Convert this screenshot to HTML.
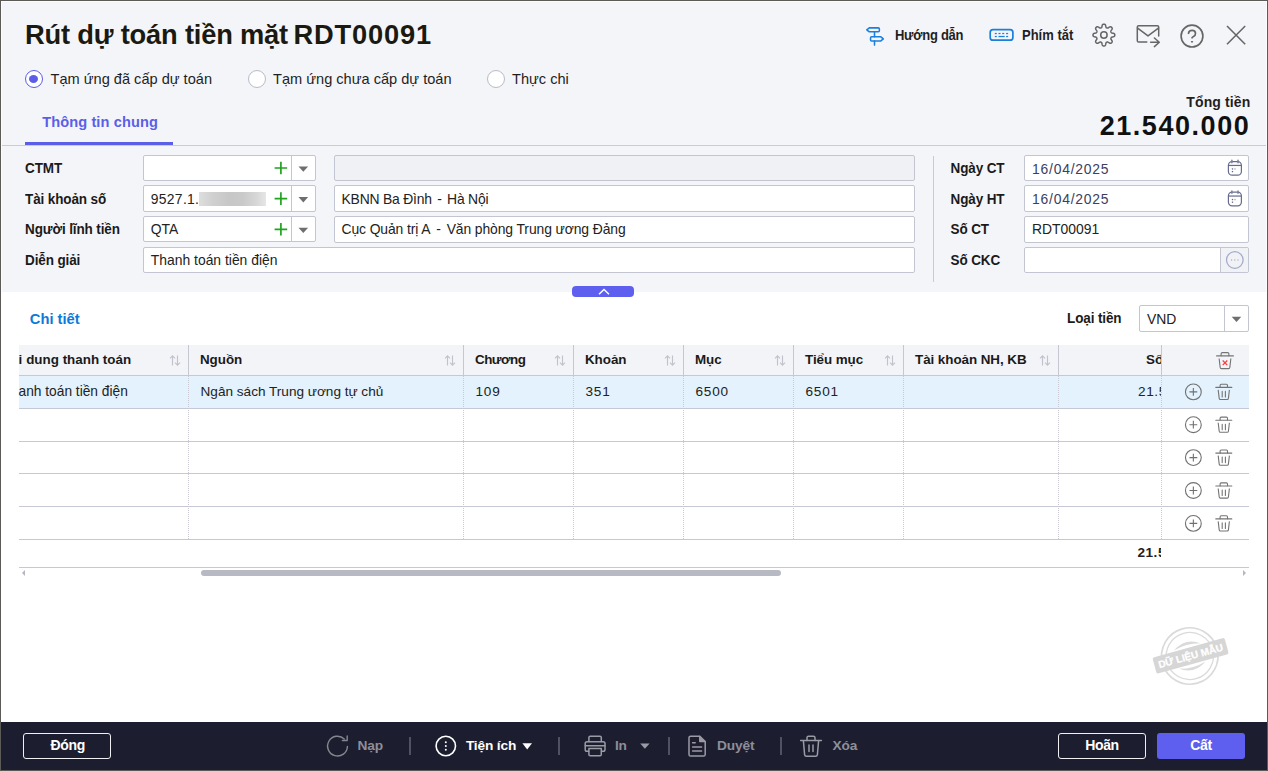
<!DOCTYPE html>
<html lang="vi">
<head>
<meta charset="utf-8">
<title>Rút dự toán tiền mặt RDT00091</title>
<style>
*{box-sizing:border-box;margin:0;padding:0}
html,body{width:1268px;height:771px;overflow:hidden;background:#fff}
body{font-family:"Liberation Sans",sans-serif;font-size:14px;color:#1f1f1f;position:relative}
.abs{position:absolute}
.t{position:absolute;white-space:nowrap;line-height:1;transform-origin:0 50%}
.b{font-weight:bold}
#hdr{left:0;top:0;width:1268px;height:292px;background:#f4f5f9}
#frame-l{left:0;top:0;width:1px;height:771px;background:#5c5a57}
#frame-t{left:0;top:0;width:1268px;height:1px;background:#5c5a57}
#frame-r{left:1267px;top:0;width:1px;height:771px;background:#5c5a57}
#frame-b{left:0;top:770px;width:1268px;height:1px;background:#5c5a57}
.inl{background:#fdfdff}
#sep{left:1px;top:145px;width:1266px;height:1px;background:#c9cbd6}
#tabline{left:25px;top:142px;width:148px;height:3px;background:#5b5fe8}
.inp{position:absolute;height:26px;background:#fff;border:1px solid #c3c5d0;border-radius:2px}
.inp.dis{background:#f0f1f5}
.vdiv{position:absolute;top:0;width:1px;height:24px;background:#c3c5d0}
.radio{position:absolute;width:18px;height:18px;border-radius:50%;border:1px solid #b9bbc7;background:#fff}
.radio.on{border-color:#5b5fe8}
.radio.on:after{content:"";position:absolute;left:3px;top:4px;width:9px;height:8px;border-radius:50%;background:#5b5fe8}
#foot{left:0;top:722px;width:1268px;height:49px;background:#1c1e2f}
.fbtn{position:absolute;height:26px;border-radius:3px;color:#fff;font-weight:bold;font-size:14px;letter-spacing:-.35px;text-align:center;line-height:23px}
.lbl{font-size:13.5px;color:#1a1a1a;letter-spacing:-.12px;margin-top:.2px;transform-origin:0 84.65%;transform:scaleY(1.06)}
.it{font-size:13.9px;color:#222}
.th{font-size:13.4px;color:#1a1a1a;letter-spacing:-.05px}
.td{font-size:13.6px;color:#222}
.hv{top:345px;width:1px;height:30px;background:#c5c7d2}
.ft{top:738.7px;font-size:13.7px;letter-spacing:-.15px}
.ft.dis{color:#8e8f99}
.fsep{position:absolute;top:737px;width:2px;height:18px;background:#505263}
/* grid */
.hl{position:absolute;height:1px;background:#c6c8d6}
.vl{position:absolute;width:0;border-left:1px dotted #c8c9d3}
</style>
</head>
<body>
<div id="hdr" class="abs"></div>
<div id="sep" class="abs"></div>
<div id="tabline" class="abs"></div>

<!-- title -->
<div class="t b" id="title" style="left:25px;top:20.7px;font-size:27.3px;color:#1a1a10;letter-spacing:-.2px">Rút dự toán tiền mặt</div><div class="t b" id="title2" style="left:293.6px;top:20.7px;font-size:27.3px;color:#1a1a10;letter-spacing:.8px">RDT00091</div>

<!-- radios -->
<div class="radio on" style="left:25px;top:70px"></div>
<div class="t" id="r1" style="left:50.5px;top:71.9px;font-size:14.6px">Tạm ứng đã cấp dự toán</div>
<div class="radio" style="left:248px;top:70px"></div>
<div class="t" id="r2" style="left:273px;top:71.9px;font-size:14.6px">Tạm ứng chưa cấp dự toán</div>
<div class="radio" style="left:487px;top:70px"></div>
<div class="t" id="r3" style="left:512px;top:71.9px;font-size:14.6px">Thực chi</div>

<!-- tab -->
<div class="t b" id="tab" style="left:42.2px;top:114.6px;font-size:14.6px;color:#5b5fe8;letter-spacing:.1px">Thông tin chung</div>

<!-- total -->
<div class="t b" id="tt" style="left:1186.3px;top:95.2px;font-size:14px;letter-spacing:.12px">Tổng tiền</div>
<div class="t b" id="tot" style="left:1099.7px;top:113.4px;font-size:27px;color:#111;letter-spacing:1.55px">21.540.000</div>

<!-- header links -->
<div class="t b" id="hd" style="left:895px;top:28.6px;font-size:13px;letter-spacing:-.27px;transform-origin:0 84.65%;transform:scaleY(1.085);color:#1f1f1f">Hướng dẫn</div>
<div class="t b" id="pt" style="left:1022px;top:28.6px;font-size:13px;transform-origin:0 84.65%;transform:scaleY(1.085);color:#1f1f1f">Phím tắt</div>

<!-- FORM -->
<div class="t b lbl" id="l1" style="left:25px;top:162px">CTMT</div>
<div class="t b lbl" id="l2" style="left:25px;top:192.8px">Tài khoản số</div>
<div class="t b lbl" id="l3" style="left:25px;top:222.9px">Người lĩnh tiền</div>
<div class="t b lbl" id="l4" style="left:25px;top:254px">Diễn giải</div>

<div class="inp" style="left:143px;top:155px;width:173px"><div class="vdiv" style="left:147px"></div></div>
<div class="inp" style="left:143px;top:185px;height:27px;width:173px"><div class="vdiv" style="left:147px;height:25px"></div></div>
<div class="inp" style="left:143px;top:216px;width:173px"><div class="vdiv" style="left:147px"></div></div>
<div class="inp dis" style="left:334px;top:155px;width:581px"></div>
<div class="inp" style="left:334px;top:185px;height:27px;width:581px"></div>
<div class="inp" style="left:334px;top:216px;height:27px;width:581px"></div>
<div class="inp" style="left:143px;top:247px;width:772px"></div>

<div class="abs" id="blur" style="left:199px;top:191.5px;width:67px;height:14.5px;background:linear-gradient(90deg,#dedede 0%,#d0d0d0 20%,#c7c7c7 45%,#c9c9c9 65%,#d6d6d6 85%,#e6e6e6 100%)"></div>
<div class="t it" id="i1" style="left:150.8px;top:192.6px;letter-spacing:.3px">9527.1.</div>
<div class="t it" id="i2" style="left:150.8px;top:223.2px">QTA</div>
<div class="t it" id="i3" style="left:341.5px;top:192.6px;letter-spacing:-.2px">KBNN Ba Đình<span style="margin:0 1.8px"> - </span>Hà Nội</div>
<div class="t it" id="i4" style="left:341.5px;top:223.2px;letter-spacing:-.1px">Cục Quản trị A<span style="margin:0 2.1px"> - </span>Văn phòng Trung ương Đảng</div>
<div class="t it" id="i5" style="left:150.8px;top:253.9px">Thanh toán tiền điện</div>

<div class="abs" style="left:933px;top:156px;width:1px;height:126px;background:#c9cad2"></div>
<div class="t b lbl" id="l5" style="left:950.5px;top:162px">Ngày CT</div>
<div class="t b lbl" id="l6" style="left:950.5px;top:192.8px">Ngày HT</div>
<div class="t b lbl" id="l7" style="left:950.5px;top:222.9px">Số CT</div>
<div class="t b lbl" id="l8" style="left:950.5px;top:254px">Số CKC</div>
<div class="inp" style="left:1024px;top:155px;width:225px"></div>
<div class="inp" style="left:1024px;top:185px;height:27px;width:225px"></div>
<div class="inp" style="left:1024px;top:216px;height:27px;width:225px"></div>
<div class="inp" style="left:1024px;top:247px;width:225px"><div class="abs" style="left:195px;top:0;width:28px;height:24px;background:#f1f2f6;border-left:1px solid #c3c5d0"></div></div>
<div class="t it" id="d1" style="left:1032px;top:162.5px;color:#3b4060;letter-spacing:.78px">16/04/2025</div>
<div class="t it" id="d2" style="left:1032px;top:193.2px;color:#3b4060;letter-spacing:.78px">16/04/2025</div>
<div class="t it" id="d3" style="left:1032px;top:223px">RDT00091</div>

<!-- collapse -->
<div class="abs" style="left:572px;top:286px;width:62px;height:11px;border-radius:4px;background:#5e5fee"></div>

<!-- detail header -->
<div class="t b" id="ct" style="left:29.8px;top:312.2px;font-size:14.7px;color:#0d7ad9">Chi tiết</div>
<div class="t b lbl" id="lt" style="left:1067px;top:312.3px">Loại tiền</div>
<div class="inp" style="left:1139px;top:305px;width:110px;height:27px"><div class="vdiv" style="left:84px;height:25px"></div></div>
<div class="t it" id="vnd" style="left:1147px;top:313.3px">VND</div>

<!-- TABLE -->
<div class="abs" id="thead" style="left:19px;top:345px;width:1230px;height:30px;background:#f3f4f8"></div>
<div class="abs" id="rowsel" style="left:19px;top:376px;width:1230px;height:32px;background:#e3f2fd"></div>
<div class="hl" style="left:19px;top:375px;width:1230px"></div>
<div class="hl" style="left:19px;top:408px;width:1230px"></div>
<div class="hl" style="left:19px;top:441px;width:1230px"></div>
<div class="hl" style="left:19px;top:473px;width:1230px"></div>
<div class="hl" style="left:19px;top:506px;width:1230px"></div>
<div class="hl" style="left:19px;top:539px;width:1230px"></div>
<div class="hl" style="left:19px;top:567px;width:1230px"></div>
<!-- header solid vlines -->
<div class="abs hv" style="left:188px"></div>
<div class="abs hv" style="left:463px"></div>
<div class="abs hv" style="left:573px"></div>
<div class="abs hv" style="left:683px"></div>
<div class="abs hv" style="left:793px"></div>
<div class="abs hv" style="left:903px"></div>
<div class="abs hv" style="left:1058px"></div>
<div class="abs hv" style="left:1161px"></div>
<!-- body dotted vlines -->
<div class="vl" style="left:188px;top:376px;height:163px"></div>
<div class="vl" style="left:463px;top:376px;height:163px"></div>
<div class="vl" style="left:573px;top:376px;height:163px"></div>
<div class="vl" style="left:683px;top:376px;height:163px"></div>
<div class="vl" style="left:793px;top:376px;height:163px"></div>
<div class="vl" style="left:903px;top:376px;height:163px"></div>
<div class="vl" style="left:1058px;top:376px;height:163px"></div>
<div class="vl" style="left:1161px;top:376px;height:163px"></div>

<div class="t b th" id="h1a" style="left:18.5px;top:352.8px">i</div><div class="t b th" id="h1" style="left:26.2px;top:352.8px;letter-spacing:0">dung thanh toán</div>
<div class="t b th" id="h2" style="left:200px;top:352.8px">Nguồn</div>
<div class="t b th" id="h3" style="letter-spacing:-.5px;left:475px;top:352.8px">Chương</div>
<div class="t b th" id="h4" style="left:585px;top:352.8px">Khoản</div>
<div class="t b th" id="h5" style="left:695px;top:352.8px">Mục</div>
<div class="t b th" id="h6" style="left:805px;top:352.8px">Tiểu mục</div>
<div class="t b th" id="h7" style="left:915px;top:352.8px">Tài khoản NH, KB</div>
<div class="abs" style="left:1100px;top:345px;width:61px;height:30px;overflow:hidden"><div class="t b th" id="h8" style="left:46px;top:7.8px">Số tiền</div></div>

<div class="t td" id="c1" style="left:18.5px;top:384.8px;font-size:13.75px">anh toán tiền điện</div>
<div class="t td" id="c2" style="left:200.5px;top:384.8px">Ngân sách Trung ương tự chủ</div>
<div class="t td" id="c3" style="letter-spacing:.8px;left:475.5px;top:384.8px">109</div>
<div class="t td" id="c4" style="letter-spacing:.8px;left:585.5px;top:384.8px">351</div>
<div class="t td" id="c5" style="letter-spacing:.8px;left:695.5px;top:384.8px">6500</div>
<div class="t td" id="c6" style="letter-spacing:.8px;left:805.5px;top:384.8px">6501</div>
<div class="abs" style="left:1100px;top:376px;width:61px;height:32px;overflow:hidden"><div class="t td" id="c8" style="letter-spacing:.6px;left:38px;top:8.8px">21.540.000</div></div>
<div class="abs" style="left:1100px;top:540px;width:61px;height:26px;overflow:hidden"><div class="t b td" id="f8" style="letter-spacing:.5px;left:37.5px;top:6px">21.540.000</div></div>

<!-- scrollbar -->
<div class="abs" style="left:201px;top:570px;width:580px;height:6px;border-radius:3px;background:#b8bac3"></div>
<div class="abs" style="left:22px;top:570px;width:0;height:0;border-top:3px solid transparent;border-bottom:3px solid transparent;border-right:3px solid #b4b6c0"></div>
<div class="abs" style="left:1243px;top:570px;width:0;height:0;border-top:3px solid transparent;border-bottom:3px solid transparent;border-left:3px solid #b4b6c0"></div>

<svg class="abs" id="ov" style="left:0;top:0" width="1268" height="771" viewBox="0 0 1268 771">
<g stroke="#1b7fdc" stroke-width="1.55" fill="none" stroke-linejoin="round" stroke-linecap="round"><path d="M869.3 27.85H878.3Q879.35 27.85 879.35 28.9V30.75Q879.35 31.8 878.3 31.8H869.3L866.8 29.8Z"/><path d="M871.6 36.8H880.9L883.3 38.9L880.9 40.95H871.6Q870.55 40.95 870.55 39.9V37.85Q870.55 36.8 871.6 36.8Z"/><path d="M874.5 31.9V36.7M874.5 41V45.1"/></g>
<g><rect x="990.2" y="29.6" width="22.7" height="10.6" rx="2.8" stroke="#1b7fdc" stroke-width="1.7" fill="none"/><g fill="#1b7fdc"><rect x="994.8" y="32.9" width="2" height="1.25"/><rect x="998.5" y="32.9" width="2" height="1.25"/><rect x="1002.2" y="32.9" width="2" height="1.25"/><rect x="1006.1" y="32.9" width="2" height="1.25"/><rect x="994.8" y="35.9" width="2" height="1.25"/><rect x="998.5" y="35.9" width="6.2" height="1.25"/><rect x="1006.1" y="35.9" width="2" height="1.25"/></g></g>
<g stroke="#666" stroke-width="1.5" fill="none" stroke-linejoin="round"><path d="M1114.80 35.05L1114.79 35.34L1114.74 35.62L1114.66 35.90L1114.51 36.17L1114.26 36.41L1113.87 36.63L1113.33 36.80L1112.72 36.92L1112.17 37.04L1111.77 37.16L1111.50 37.30L1111.32 37.46L1111.20 37.63L1111.10 37.81L1111.01 38.00L1110.94 38.19L1110.89 38.38L1110.86 38.59L1110.87 38.83L1110.96 39.12L1111.15 39.49L1111.46 39.96L1111.80 40.48L1112.07 40.98L1112.19 41.41L1112.19 41.77L1112.11 42.06L1111.97 42.32L1111.80 42.55L1111.61 42.76L1111.40 42.95L1111.17 43.12L1110.91 43.26L1110.62 43.34L1110.26 43.34L1109.83 43.22L1109.33 42.95L1108.81 42.61L1108.34 42.30L1107.97 42.11L1107.68 42.02L1107.44 42.01L1107.23 42.04L1107.04 42.09L1106.85 42.16L1106.66 42.25L1106.48 42.35L1106.31 42.47L1106.15 42.65L1106.01 42.92L1105.89 43.32L1105.77 43.87L1105.65 44.48L1105.48 45.02L1105.26 45.41L1105.02 45.66L1104.75 45.81L1104.47 45.89L1104.19 45.94L1103.90 45.95L1103.61 45.94L1103.33 45.89L1103.05 45.81L1102.78 45.66L1102.54 45.41L1102.32 45.02L1102.15 44.48L1102.03 43.87L1101.91 43.32L1101.79 42.92L1101.65 42.65L1101.49 42.47L1101.32 42.35L1101.14 42.25L1100.95 42.16L1100.76 42.09L1100.57 42.04L1100.36 42.01L1100.12 42.02L1099.83 42.11L1099.46 42.30L1098.99 42.61L1098.47 42.95L1097.97 43.22L1097.54 43.34L1097.18 43.34L1096.89 43.26L1096.63 43.12L1096.40 42.95L1096.19 42.76L1096.00 42.55L1095.83 42.32L1095.69 42.06L1095.61 41.77L1095.61 41.41L1095.73 40.98L1096.00 40.48L1096.34 39.96L1096.65 39.49L1096.84 39.12L1096.93 38.83L1096.94 38.59L1096.91 38.38L1096.86 38.19L1096.79 38.00L1096.70 37.81L1096.60 37.63L1096.48 37.46L1096.30 37.30L1096.03 37.16L1095.63 37.04L1095.08 36.92L1094.47 36.80L1093.93 36.63L1093.54 36.41L1093.29 36.17L1093.14 35.90L1093.06 35.62L1093.01 35.34L1093.00 35.05L1093.01 34.76L1093.06 34.48L1093.14 34.20L1093.29 33.93L1093.54 33.69L1093.93 33.47L1094.47 33.30L1095.08 33.18L1095.63 33.06L1096.03 32.94L1096.30 32.80L1096.48 32.64L1096.60 32.47L1096.70 32.29L1096.79 32.10L1096.86 31.91L1096.91 31.72L1096.94 31.51L1096.93 31.27L1096.84 30.98L1096.65 30.61L1096.34 30.14L1096.00 29.62L1095.73 29.12L1095.61 28.69L1095.61 28.33L1095.69 28.04L1095.83 27.78L1096.00 27.55L1096.19 27.34L1096.40 27.15L1096.63 26.98L1096.89 26.84L1097.18 26.76L1097.54 26.76L1097.97 26.88L1098.47 27.15L1098.99 27.49L1099.46 27.80L1099.83 27.99L1100.12 28.08L1100.36 28.09L1100.57 28.06L1100.76 28.01L1100.95 27.94L1101.14 27.85L1101.32 27.75L1101.49 27.63L1101.65 27.45L1101.79 27.18L1101.91 26.78L1102.03 26.23L1102.15 25.62L1102.32 25.08L1102.54 24.69L1102.78 24.44L1103.05 24.29L1103.33 24.21L1103.61 24.16L1103.90 24.15L1104.19 24.16L1104.47 24.21L1104.75 24.29L1105.02 24.44L1105.26 24.69L1105.48 25.08L1105.65 25.62L1105.77 26.23L1105.89 26.78L1106.01 27.18L1106.15 27.45L1106.31 27.63L1106.48 27.75L1106.66 27.85L1106.85 27.94L1107.04 28.01L1107.23 28.06L1107.44 28.09L1107.68 28.08L1107.97 27.99L1108.34 27.80L1108.81 27.49L1109.33 27.15L1109.83 26.88L1110.26 26.76L1110.62 26.76L1110.91 26.84L1111.17 26.98L1111.40 27.15L1111.61 27.34L1111.80 27.55L1111.97 27.78L1112.11 28.04L1112.19 28.33L1112.19 28.69L1112.07 29.12L1111.80 29.62L1111.46 30.14L1111.15 30.61L1110.96 30.98L1110.87 31.27L1110.86 31.51L1110.89 31.72L1110.94 31.91L1111.01 32.10L1111.10 32.29L1111.20 32.47L1111.32 32.64L1111.50 32.80L1111.77 32.94L1112.17 33.06L1112.72 33.18L1113.33 33.30L1113.87 33.47L1114.26 33.69L1114.51 33.93L1114.66 34.20L1114.74 34.48L1114.79 34.76Z"/><circle cx="1103.9" cy="35.05" r="3.2"/></g>
<g stroke="#666" stroke-width="1.5" fill="none" stroke-linejoin="round" stroke-linecap="round"><path d="M1146.8 42.1H1138.7Q1137.3 42.1 1137.3 40.7V27.1Q1137.3 25.7 1138.7 25.7H1157.3Q1158.7 25.7 1158.7 27.1V36"/><path d="M1137.6 28.2L1148 35.9L1158.4 28.2"/><path d="M1150.6 42.3H1159M1154.4 38L1159.3 42.3L1154.4 46.6"/></g>
<g stroke="#666" stroke-width="1.65" fill="none" stroke-linecap="round"><circle cx="1192" cy="36.1" r="10.9"/><path d="M1188.5 33.3Q1188.8 30.3 1192.1 30.3Q1195.5 30.3 1195.5 33.4Q1195.5 35.4 1193.5 36.4Q1192.1 37 1192 37.8"/></g><rect x="1190.9" y="41" width="2.2" height="1.5" rx=".6" fill="#666"/>
<path d="M1227 26L1245.2 44.2M1245.2 26L1227 44.2" stroke="#666" stroke-width="1.55" fill="none"/>
<path d="M274.59999999999997 168H287.2M280.9 161.7V174.3" stroke="#21a321" stroke-width="1.7" fill="none"/>
<path d="M298.5 166.4H308.1L303.3 171.79999999999998Z" fill="#6e6e6e"/>
<path d="M274.59999999999997 198.6H287.2M280.9 192.29999999999998V204.9" stroke="#21a321" stroke-width="1.7" fill="none"/>
<path d="M298.5 197.0H308.1L303.3 202.39999999999998Z" fill="#6e6e6e"/>
<path d="M274.59999999999997 229.3H287.2M280.9 223.0V235.60000000000002" stroke="#21a321" stroke-width="1.7" fill="none"/>
<path d="M298.5 227.70000000000002H308.1L303.3 233.1Z" fill="#6e6e6e"/>
<g><circle cx="1234.8" cy="260" r="8.3" stroke="#a6aacb" stroke-width="1.3" fill="none"/><circle cx="1231.6" cy="260" r=".7" fill="#a9acc6"/><circle cx="1234.8" cy="260" r=".7" fill="#a9acc6"/><circle cx="1238" cy="260" r=".7" fill="#a9acc6"/></g>
<path d="M599 294.3L604 289.4L609 294.3" stroke="#fff" stroke-width="1.4" fill="none"/>
<path d="M1231.7 316.7H1241.3L1236.5 322.09999999999997Z" fill="#6e6e6e"/>
<g stroke="#c0c3cc" stroke-width="1.15" fill="none"><path d="M172.5 365.5V355.8M170 358.3L172.5 355.8L175 358.3"/><path d="M177.5 355.5V365.2M175 362.7L177.5 365.2L180 362.7"/></g>
<g stroke="#c0c3cc" stroke-width="1.15" fill="none"><path d="M447.5 365.5V355.8M445 358.3L447.5 355.8L450 358.3"/><path d="M452.5 355.5V365.2M450 362.7L452.5 365.2L455 362.7"/></g>
<g stroke="#c0c3cc" stroke-width="1.15" fill="none"><path d="M557.5 365.5V355.8M555 358.3L557.5 355.8L560 358.3"/><path d="M562.5 355.5V365.2M560 362.7L562.5 365.2L565 362.7"/></g>
<g stroke="#c0c3cc" stroke-width="1.15" fill="none"><path d="M667.5 365.5V355.8M665 358.3L667.5 355.8L670 358.3"/><path d="M672.5 355.5V365.2M670 362.7L672.5 365.2L675 362.7"/></g>
<g stroke="#c0c3cc" stroke-width="1.15" fill="none"><path d="M777.5 365.5V355.8M775 358.3L777.5 355.8L780 358.3"/><path d="M782.5 355.5V365.2M780 362.7L782.5 365.2L785 362.7"/></g>
<g stroke="#c0c3cc" stroke-width="1.15" fill="none"><path d="M887.5 365.5V355.8M885 358.3L887.5 355.8L890 358.3"/><path d="M892.5 355.5V365.2M890 362.7L892.5 365.2L895 362.7"/></g>
<g stroke="#c0c3cc" stroke-width="1.15" fill="none"><path d="M1042.5 365.5V355.8M1040 358.3L1042.5 355.8L1045 358.3"/><path d="M1047.5 355.5V365.2M1045 362.7L1047.5 365.2L1050 362.7"/></g>
<g transform="translate(1225 360.6) scale(1.05)" stroke="#747474" stroke-width="1.048" fill="none" stroke-linejoin="round" stroke-linecap="round"><path d="M-8 -4.5H8"/><path d="M-3.7 -4.7V-6.5Q-3.7 -7.6 -2.6 -7.6H2.6Q3.7 -7.6 3.7 -6.5V-4.7"/><path d="M-5.6 -2L-4.6 6.5Q-4.5 7.6 -3.4 7.6H3.4Q4.5 7.6 4.6 6.5L5.6 -2" stroke-linecap="butt"/></g>
<path d="M1222.7 360.5L1227.3 365.1M1227.3 360.5L1222.7 365.1" stroke="#ff3a3a" stroke-width="1.3" fill="none"/>
<g stroke="#707070" stroke-width="1.1" fill="none"><circle cx="1193.35" cy="391.9" r="7.9"/><path d="M1189.4499999999998 391.9H1197.25M1193.35 388.0V395.79999999999995"/></g>
<g transform="translate(1223.8 391.9) scale(1.0)" stroke="#747474" stroke-width="1.100" fill="none" stroke-linejoin="round" stroke-linecap="round"><path d="M-8 -4.5H8"/><path d="M-3.7 -4.7V-6.5Q-3.7 -7.6 -2.6 -7.6H2.6Q3.7 -7.6 3.7 -6.5V-4.7"/><path d="M-5.6 -2L-4.6 6.5Q-4.5 7.6 -3.4 7.6H3.4Q4.5 7.6 4.6 6.5L5.6 -2" stroke-linecap="butt"/><path d="M-1.6 -0.5V5M1.6 -0.5V5"/></g>
<g stroke="#707070" stroke-width="1.1" fill="none"><circle cx="1193.35" cy="424.7" r="7.9"/><path d="M1189.4499999999998 424.7H1197.25M1193.35 420.8V428.59999999999997"/></g>
<g transform="translate(1223.8 424.7) scale(1.0)" stroke="#747474" stroke-width="1.100" fill="none" stroke-linejoin="round" stroke-linecap="round"><path d="M-8 -4.5H8"/><path d="M-3.7 -4.7V-6.5Q-3.7 -7.6 -2.6 -7.6H2.6Q3.7 -7.6 3.7 -6.5V-4.7"/><path d="M-5.6 -2L-4.6 6.5Q-4.5 7.6 -3.4 7.6H3.4Q4.5 7.6 4.6 6.5L5.6 -2" stroke-linecap="butt"/><path d="M-1.6 -0.5V5M1.6 -0.5V5"/></g>
<g stroke="#707070" stroke-width="1.1" fill="none"><circle cx="1193.35" cy="457.6" r="7.9"/><path d="M1189.4499999999998 457.6H1197.25M1193.35 453.70000000000005V461.5"/></g>
<g transform="translate(1223.8 457.6) scale(1.0)" stroke="#747474" stroke-width="1.100" fill="none" stroke-linejoin="round" stroke-linecap="round"><path d="M-8 -4.5H8"/><path d="M-3.7 -4.7V-6.5Q-3.7 -7.6 -2.6 -7.6H2.6Q3.7 -7.6 3.7 -6.5V-4.7"/><path d="M-5.6 -2L-4.6 6.5Q-4.5 7.6 -3.4 7.6H3.4Q4.5 7.6 4.6 6.5L5.6 -2" stroke-linecap="butt"/><path d="M-1.6 -0.5V5M1.6 -0.5V5"/></g>
<g stroke="#707070" stroke-width="1.1" fill="none"><circle cx="1193.35" cy="490.5" r="7.9"/><path d="M1189.4499999999998 490.5H1197.25M1193.35 486.6V494.4"/></g>
<g transform="translate(1223.8 490.5) scale(1.0)" stroke="#747474" stroke-width="1.100" fill="none" stroke-linejoin="round" stroke-linecap="round"><path d="M-8 -4.5H8"/><path d="M-3.7 -4.7V-6.5Q-3.7 -7.6 -2.6 -7.6H2.6Q3.7 -7.6 3.7 -6.5V-4.7"/><path d="M-5.6 -2L-4.6 6.5Q-4.5 7.6 -3.4 7.6H3.4Q4.5 7.6 4.6 6.5L5.6 -2" stroke-linecap="butt"/><path d="M-1.6 -0.5V5M1.6 -0.5V5"/></g>
<g stroke="#707070" stroke-width="1.1" fill="none"><circle cx="1193.35" cy="523.4" r="7.9"/><path d="M1189.4499999999998 523.4H1197.25M1193.35 519.5V527.3"/></g>
<g transform="translate(1223.8 523.4) scale(1.0)" stroke="#747474" stroke-width="1.100" fill="none" stroke-linejoin="round" stroke-linecap="round"><path d="M-8 -4.5H8"/><path d="M-3.7 -4.7V-6.5Q-3.7 -7.6 -2.6 -7.6H2.6Q3.7 -7.6 3.7 -6.5V-4.7"/><path d="M-5.6 -2L-4.6 6.5Q-4.5 7.6 -3.4 7.6H3.4Q4.5 7.6 4.6 6.5L5.6 -2" stroke-linecap="butt"/><path d="M-1.6 -0.5V5M1.6 -0.5V5"/></g>
<g stroke="#676c8e" stroke-width="1.2" fill="none"><rect x="1228.40" y="161.60" width="13" height="13.6" rx="3.7"/><path d="M1228.40 165.45H1241.40"/><path d="M1231.90 160.30V162.70M1238.00 160.30V162.70" stroke-width="1.5" stroke-linecap="round" stroke="#7a7f9e"/></g><rect x="1231.85" y="168.30" width="1.3" height="1.3" fill="#636889"/><rect x="1234.35" y="168.30" width="1.3" height="1.3" fill="#636889" opacity=".6"/><rect x="1231.85" y="170.95" width="1.3" height="1.3" fill="#636889"/>
<g stroke="#676c8e" stroke-width="1.2" fill="none"><rect x="1228.40" y="192.20" width="13" height="13.6" rx="3.7"/><path d="M1228.40 196.05H1241.40"/><path d="M1231.90 190.90V193.30M1238.00 190.90V193.30" stroke-width="1.5" stroke-linecap="round" stroke="#7a7f9e"/></g><rect x="1231.85" y="198.90" width="1.3" height="1.3" fill="#636889"/><rect x="1234.35" y="198.90" width="1.3" height="1.3" fill="#636889" opacity=".6"/><rect x="1231.85" y="201.55" width="1.3" height="1.3" fill="#636889"/>
</svg>
<div id="foot" class="abs"></div>
<div class="fbtn" id="b1" style="left:23px;top:733px;width:88px;padding-left:1.5px;border:1px solid #f0f0f4">Đóng</div>
<div class="fbtn" id="b2" style="left:1058px;top:733px;width:88px;border:1px solid #f0f0f4">Hoãn</div>
<div class="fbtn" id="b3" style="left:1157px;top:733px;width:88px;background:#5e5fee;line-height:25px">Cất</div>
<div class="t b ft dis" id="f1" style="left:357.5px">Nạp</div>
<div class="t b ft" id="f2" style="left:465.9px;color:#fff">Tiện ích</div>
<div class="t b ft dis" id="f3" style="left:614.9px">In</div>
<div class="t b ft dis" id="f4" style="left:717.1px">Duyệt</div>
<div class="t b ft dis" id="f5" style="left:832.5px">Xóa</div>
<div class="fsep" style="left:409px"></div>
<div class="fsep" style="left:558px"></div>
<div class="fsep" style="left:668px"></div>
<div class="fsep" style="left:780px"></div>
<svg class="abs" id="fov" style="left:0;top:722px" width="1268" height="49" viewBox="0 722 1268 49">
<g stroke="#85868f" stroke-width="1.4" fill="none" stroke-linecap="round" stroke-linejoin="round">
<path d="M347.4 746.4A9.9 9.9 0 1 1 344.3 738.9"/><path d="M347.2 736V740.5H342.4"/>
</g>
<g><circle cx="445.8" cy="746" r="9.7" stroke="#fff" stroke-width="1.6" fill="none"/><circle cx="445.8" cy="742.2" r="1" fill="#fff"/><circle cx="445.8" cy="746" r="1" fill="#fff"/><circle cx="445.8" cy="749.8" r="1" fill="#fff"/></g>
<path d="M522.4 743.2H532L527.2 749.4Z" fill="#fff"/>
<path d="M640.2 743.5H649.6L644.9 748.8Z" fill="#9a9ba5"/>
<g stroke="#9a9ba5" stroke-width="1.5" fill="none" stroke-linejoin="round" stroke-linecap="round">
<path d="M588.9 741.6V737.6Q588.9 736.2 590.3 736.2H599.9Q601.3 736.2 601.3 737.6V741.6"/>
<path d="M588.7 751.2H587Q585.2 751.2 585.2 749.4V743.6Q585.2 741.8 587 741.8H603.2Q605 741.8 605 743.6V749.4Q605 751.2 603.2 751.2H601.5"/>
<path d="M585.4 745.7H604.8"/>
<path d="M588.9 748.4H601.3V754.6Q601.3 755.8 600.1 755.8H590.1Q588.9 755.8 588.9 754.6Z"/>
</g>
<g stroke="#9a9ba5" stroke-width="1.5" fill="none" stroke-linejoin="round" stroke-linecap="round">
<path d="M690.6 736.2H699.8L705.2 741.6V754.4Q705.2 756 703.6 756H690.6Q689 756 689 754.4V737.8Q689 736.2 690.6 736.2Z"/>
<path d="M699.8 736.4V741.6H705" fill="#9a9ba5"/>
<path d="M692.6 742.7H695.2M692.6 747H701.6M692.6 751H701.6"/>
</g>
<g stroke="#9a9ba5" stroke-width="1.5" fill="none" stroke-linejoin="round" stroke-linecap="round">
<path d="M800.6 740.6H821.4"/>
<path d="M807 740.4V737.8Q807 736.2 808.6 736.2H813.4Q815 736.2 815 737.8V740.4"/>
<path d="M803.4 740.8L804.6 754.6Q804.8 756.2 806.4 756.2H815.6Q817.2 756.2 817.4 754.6L818.6 740.8"/>
<path d="M809 745V751.6M813 745V751.6"/>
</g>
</svg>
<!-- stamp -->
<svg class="abs" id="stamp" style="left:1140px;top:615px" width="100" height="85" viewBox="1140 615 100 85">
<g transform="rotate(-15.5 1189.8 656)" fill="none" stroke="#dadada">
<circle cx="1189.8" cy="656" r="28.2" stroke-width="1.7"/>
<circle cx="1189.8" cy="656" r="23.6" stroke-width="1.3"/>
<path d="M1176 646.5Q1189.8 637 1203.6 646.5Q1189.8 642.5 1176 646.5Z" fill="#dadada" stroke="none"/>
<path d="M1176 665.5Q1189.8 675 1203.6 665.5Q1189.8 669.5 1176 665.5Z" fill="#dadada" stroke="none"/>
<rect x="1153.2" y="647.6" width="74.8" height="16.8" rx="2" fill="#d6d6d6" stroke="none"/>
<text text-anchor="middle" font-family="Liberation Sans, sans-serif" font-weight="bold" font-size="10" fill="#fff" stroke="#fff" stroke-width=".25" x="1190.6" y="659.6">DỮ LIỆU MẪU</text>
</g>
</svg>

<div class="abs inl" style="left:1px;top:1px;width:1px;height:291px"></div><div class="abs inl" style="left:1266px;top:1px;width:1px;height:291px"></div><div class="abs inl" style="left:1px;top:1px;width:1266px;height:1px"></div>
<div id="frame-l" class="abs"></div>
<div id="frame-t" class="abs"></div>
<div id="frame-r" class="abs"></div>
<div id="frame-b" class="abs"></div>
</body>
</html>
